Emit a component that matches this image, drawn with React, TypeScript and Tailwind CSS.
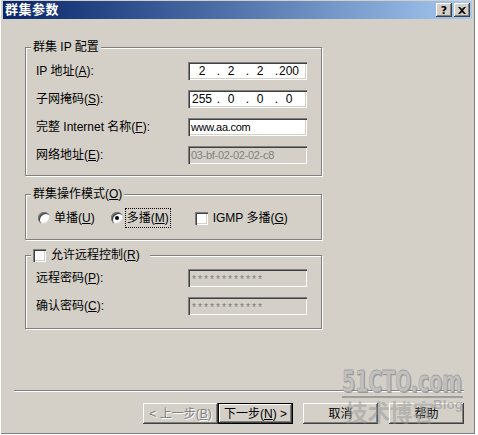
import React from 'react';

const raised =
  'bg-[#d4d0c8] shadow-[inset_-1px_-1px_0_#404040,inset_1px_1px_0_#ffffff,inset_-2px_-2px_0_#808080]';
const sunken =
  'shadow-[inset_1px_1px_0_#808080,inset_2px_2px_0_#404040,inset_-1px_-1px_0_#ffffff,inset_-2px_-2px_0_#d4d0c8]';

function Group({
  legend,
  className,
  children,
}: {
  legend: React.ReactNode;
  className: string;
  children: React.ReactNode;
}) {
  return (
    <div
      className={`relative border border-[#808080] shadow-[inset_1px_1px_0_#ffffff,1px_1px_0_#ffffff] ${className}`}
    >
      <div className="absolute -top-[8px] left-[5px] flex h-[14px] items-center bg-[#d4d0c8] px-[2px]">
        {legend}
      </div>
      {children}
    </div>
  );
}

function Field({ children, disabled }: { children: React.ReactNode; disabled?: boolean }) {
  return (
    <div
      className={`flex h-[18px] w-[119px] items-center pl-[3px] ${sunken} ${
        disabled ? 'bg-[#d4d0c8] text-[#808080]' : 'bg-white text-black'
      }`}
    >
      {children}
    </div>
  );
}

function IpField({ parts }: { parts: string[] }) {
  return (
    <Field>
      <div className="flex text-[12px] leading-none">
        {parts.map((p, i) => (
          <React.Fragment key={i}>
            {i > 0 && <span className="w-[7px] text-right">.</span>}
            <span className="w-[22px] text-center">{p}</span>
          </React.Fragment>
        ))}
      </div>
    </Field>
  );
}

function Checkbox() {
  return <div className={`h-[13px] w-[13px] shrink-0 bg-white ${sunken}`} />;
}

function Radio({ checked }: { checked?: boolean }) {
  return (
    <div className="flex h-[12px] w-[12px] shrink-0 items-center justify-center rounded-full bg-white shadow-[inset_1px_1px_0_#808080,inset_2px_2px_0_#404040,inset_-1px_-1px_0_#d4d0c8]">
      {checked && <div className="h-[4px] w-[4px] rounded-full bg-black" />}
    </div>
  );
}

function Row({ label, children }: { label: React.ReactNode; children: React.ReactNode }) {
  return (
    <div className="flex h-[18px] items-center justify-between">
      <span>{label}</span>
      {children}
    </div>
  );
}

function Button({
  children,
  disabled,
  primary,
  className = '',
}: {
  children: React.ReactNode;
  disabled?: boolean;
  primary?: boolean;
  className?: string;
}) {
  const text = disabled ? 'text-[#808080] [text-shadow:1px_1px_0_#ffffff]' : 'text-black';
  if (primary) {
    return (
      <div className={`h-[21px] w-[75px] border border-black ${className}`}>
        <div className={`flex h-full w-full items-center justify-center ${raised} ${text}`}>{children}</div>
      </div>
    );
  }
  return (
    <div className={`flex h-[21px] w-[75px] items-center justify-center ${raised} ${text} ${className}`}>
      {children}
    </div>
  );
}

// 51CTO blog watermark stamped over the bottom-right corner
function Watermark() {
  return (
    <svg className="pointer-events-none absolute left-[338px] top-[366px]" width="137" height="64">
      <text
        x="5"
        y="27"
        textLength="120"
        lengthAdjust="spacingAndGlyphs"
        fontFamily="DejaVu Sans, sans-serif"
        fontWeight="bold"
        fontSize="30"
        fill="rgba(120,120,120,0.6)"
      >
        51CTO.com
      </text>
      <text
        x="4"
        y="26"
        textLength="120"
        lengthAdjust="spacingAndGlyphs"
        fontFamily="DejaVu Sans, sans-serif"
        fontWeight="bold"
        fontSize="30"
        fill="rgba(196,196,196,0.95)"
        stroke="rgba(150,150,150,0.8)"
        strokeWidth="0.8"
      >
        51CTO.com
      </text>
      <rect x="4" y="30" width="121" height="2" fill="rgba(140,140,140,0.75)" />
      <text
        x="7"
        y="55"
        textLength="90"
        lengthAdjust="spacingAndGlyphs"
        fontFamily="Noto Sans CJK SC, sans-serif"
        fontWeight="bold"
        fontSize="23"
        fill="rgba(150,150,150,0.5)"
      >
        技术博客
      </text>
      <text
        x="95"
        y="43"
        textLength="30"
        lengthAdjust="spacingAndGlyphs"
        fontFamily="Liberation Sans, sans-serif"
        fontWeight="bold"
        fontSize="13"
        fill="rgba(150,150,150,0.6)"
      >
        Blog
      </text>
    </svg>
  );
}

export default function App() {
  return (
    <div className="h-[435px] w-[478px] overflow-hidden bg-white font-['Liberation_Sans','Noto_Sans_CJK_SC',sans-serif] text-[12px] leading-[14px] text-black">
      <div className="relative flex h-[434px] w-[475px] flex-col bg-[#d4d0c8] pt-[1px] shadow-[inset_1px_0_0_#ffffff,inset_-1px_-1px_0_#808080]">
        {/* Title bar */}
        <div className="mx-[3px] flex h-[18px] items-center justify-between bg-linear-to-r from-[#0a246a] to-[#a6caf0] pl-[2px] pr-[2px]">
          <span className="text-[13px] font-bold tracking-[0.5px] text-white">群集参数</span>
          <div className="flex gap-[2px]">
            <div className={`flex h-[14px] w-[16px] items-center justify-center ${raised}`}>
              <span className="font-['DejaVu_Sans'] text-[11px] font-bold leading-none">?</span>
            </div>
            <div className={`flex h-[14px] w-[16px] items-center justify-center ${raised}`}>
              <svg width="8" height="7" viewBox="0 0 8 7">
                <path d="M0 0h2l2 2 2-2h2L5 3.5 8 7H6L4 5 2 7H0l3-3.5z" fill="#000" />
              </svg>
            </div>
          </div>
        </div>

        <div className="ml-[25px] mt-[28px] flex w-[297px] flex-col">
          {/* Cluster IP */}
          <Group legend={<span>群集 IP 配置</span>} className="pb-[11px] pl-[10px] pr-[14px] pt-[14px]">
            <div className="flex flex-col gap-[10px]">
              <Row label={<>IP 地址(<u>A</u>):</>}>
                <IpField parts={['2', '2', '2', '200']} />
              </Row>
              <Row label={<>子网掩码(<u>S</u>):</>}>
                <IpField parts={['255', '0', '0', '0']} />
              </Row>
              <Row label={<>完整 Internet 名称(<u>F</u>):</>}>
                <Field>
                  <span className="text-[11px] tracking-[-0.3px]">www.aa.com</span>
                </Field>
              </Row>
              <Row label={<>网络地址(<u>E</u>):</>}>
                <Field disabled>
                  <span className="text-[11px] tracking-[-0.3px]">03-bf-02-02-02-c8</span>
                </Field>
              </Row>
            </div>
          </Group>

          {/* Operation mode */}
          <Group legend={<span>群集操作模式(<u>O</u>)</span>} className="mt-[18px] pb-[12px] pl-[12px] pt-[14px]">
            <div className="flex h-[18px] items-center">
              <Radio />
              <span className="ml-[4px]">单播(<u>U</u>)</span>
              <div className="ml-[16px]">
                <Radio checked />
              </div>
              <span className="ml-[3px] px-[1px] py-[2px] outline-1 outline-dotted outline-black">
                多播(<u>M</u>)
              </span>
              <div className="ml-[25px]">
                <Checkbox />
              </div>
              <span className="ml-[5px]">IGMP 多播(<u>G</u>)</span>
            </div>
          </Group>

          {/* Remote control */}
          <Group
            legend={
              <div className="flex items-center pr-[8px]">
                <Checkbox />
                <span className="ml-[5px]">允许远程控制(<u>R</u>)</span>
              </div>
            }
            className="mt-[15px] pb-[13px] pl-[10px] pr-[14px] pt-[13px]"
          >
            <div className="flex flex-col gap-[10px]">
              <Row label={<>远程密码(<u>P</u>):</>}>
                <Field disabled>
                  <span className="mt-[5px] font-['Liberation_Mono'] text-[10px] leading-none">************</span>
                </Field>
              </Row>
              <Row label={<>确认密码(<u>C</u>):</>}>
                <Field disabled>
                  <span className="mt-[5px] font-['Liberation_Mono'] text-[10px] leading-none">************</span>
                </Field>
              </Row>
            </div>
          </Group>
        </div>

        {/* Footer */}
        <div className="mt-auto pb-[10px]">
          <div className="ml-[14px] h-[2px] w-[450px] border-b border-t border-b-white border-t-[#808080]" />
          <div className="mt-[11px] flex justify-end pr-[11px]">
            <Button disabled>&lt; 上一步(<u>B</u>)</Button>
            <Button primary>下一步(<u>N</u>) &gt;</Button>
            <Button className="ml-[10px]">取消</Button>
            <Button className="ml-[11px]">帮助</Button>
          </div>
        </div>

        <Watermark />
      </div>
    </div>
  );
}
